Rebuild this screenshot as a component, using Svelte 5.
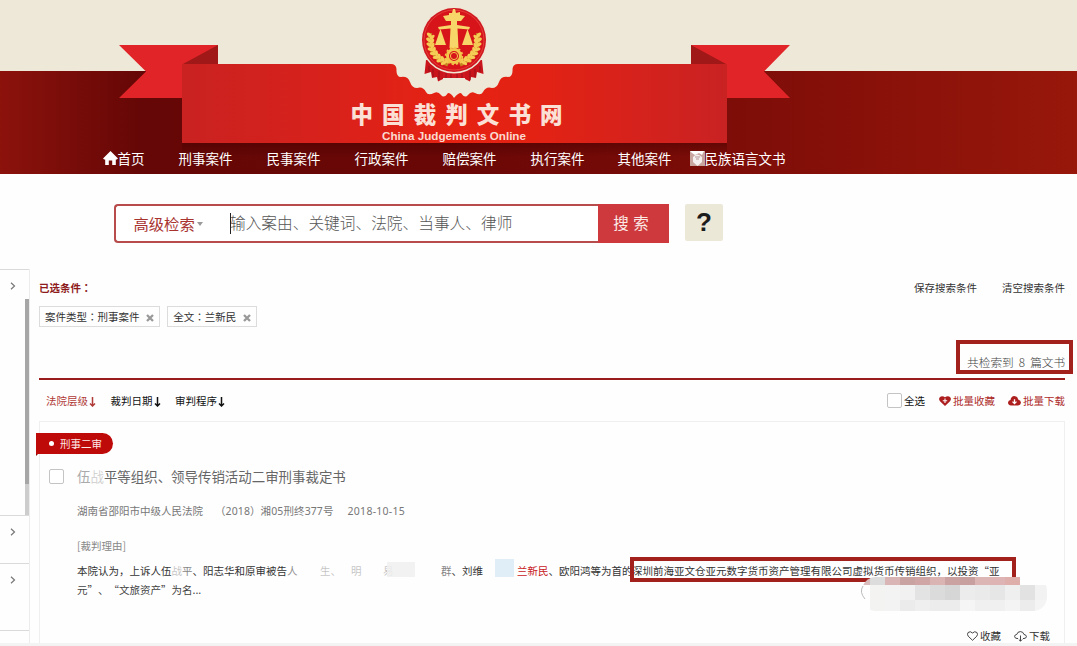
<script>
  const nav = [
    { label: '刑事案件', gap: 34 },
    { label: '民事案件', gap: 34 },
    { label: '行政案件', gap: 34 },
    { label: '赔偿案件', gap: 34 },
    { label: '执行案件', gap: 34 },
    { label: '其他案件', gap: 33 }
  ];
  const filters = [
    { name: '案件类型', value: '刑事案件' },
    { name: '全文', value: '兰新民' }
  ];
  const sorts = [
    { label: '法院层级', active: true },
    { label: '裁判日期', active: false },
    { label: '审判程序', active: false }
  ];
  const panels = [
    { height: 246, scroll: true },
    { height: 48 },
    { height: 67 },
    { height: 13, bare: true }
  ];
  // mosaic tiles over the lower right corner of the summary
  const tiles = [
    { h: 8, c: ['#d9bcbc', '#dcdcdc', '#dab5b5', '#c9a2a2', '#cfa5a5', '#dab3b3', '#cba2a2', '#c9a0a0', '#dcb5b5', '#ddb3b3', '#deaeaa', '#fefefe', '#fefefe'] },
    { h: 15, c: ['#fefefe', '#f3f3f1', '#f3f3f3', '#f1f1f1', '#e3e3e4', '#dbdbdb', '#d6d6d6', '#ececec', '#eaeaea', '#e6e6e6', '#efefef', '#e2e2e3', '#f2f2f2'] },
    { h: 11, c: ['#fefefe', '#f3f3f1', '#f3f3f3', '#ebebeb', '#efefef', '#ececec', '#ececec', '#f5f5f5', '#f0f0f0', '#f0f0f0', '#f4f4f4', '#ececec', '#f4f4f4'] }
  ];
  const leaves = [0, 1, 2, 3, 4, 5, 6, 7];
</script>

<div class="page">
  <header>
    <svg class="banner" width="1077" height="174" viewBox="0 0 1077 174">
      <defs>
        <linearGradient id="body" x1="182" x2="727" y1="0" y2="0" gradientUnits="userSpaceOnUse">
          <stop offset="0" stop-color="#c92221" /><stop offset=".28" stop-color="#d9211b" /><stop offset=".5" stop-color="#e62212" />
          <stop offset=".65" stop-color="#e32214" /><stop offset="1" stop-color="#c92223" />
        </linearGradient>
        <linearGradient id="shade" x1="0" x2="0" y1="0" y2="1">
          <stop offset="0" stop-color="#400" stop-opacity=".45" /><stop offset="1" stop-color="#400" stop-opacity="0" />
        </linearGradient>
      </defs>
      <rect x="182" y="143" width="545" height="14" fill="url(#shade)" />
      <path d="M119 45H218V98H119L146 71.500Z" fill="#e12428" />
      <path d="M790 45H691V98H790L764 71.500Z" fill="#e12428" />
      <path d="M183 64L218 45V98H183Z" fill="#a01818" />
      <path d="M726 64L691 45V98H726Z" fill="#a01818" />
      <rect x="390" y="62" width="130" height="40" fill="#eee8d9" />
      <path fill="url(#body)" d="M182 64H391Q396 64 396.500 69Q396 77 401 77Q408 76 410 82Q412 88 417 88Q423 86 426 92Q428 96 434 93Q438 91 441 95Q444 99 448 93Q451 93 454 98Q458 93 461 93Q465 99 468 95Q471 91 475 93Q481 96 483 92Q486 86 492 88Q497 88 499 82Q501 76 508 77Q513 77 512.500 69Q513 64 518 64H727V143H182Z" />
      <g>
        <path d="M426 60L424.500 74L431 72L432 78L437 77L438 81.500L443 79V73H465V79L470 81.500L471 77L476 78L477 72L483.500 74L482 60Z" fill="#c9141b" />
        <path d="M443 70H465V78H443Z" fill="#d01820" />
        <path d="M429 66V72M433 69V77M439 71V80M446 73V78M451 74V78M457 74V78M462 73V78M470 71V80M475 69V77M480 66V72" stroke="#96101a" stroke-width="1" />
        <circle cx="454" cy="40" r="33.500" fill="#efe6d4" />
        <circle cx="454" cy="40" r="32" fill="#d01820" />
        <circle cx="454" cy="40" r="30" fill="#d8141b" stroke="#e8493f" stroke-width=".8" />
        <path d="M430.500 33Q426 55 448 65M477.500 33Q482 55 460 65" fill="none" stroke="#c78622" stroke-width="3.500" />
        {#each leaves as n}
          <g fill="#f5cc55">
            <ellipse cx="454" cy="15" rx="1.700" ry="3.300" transform="rotate({-79 - n * 11} 454 40) rotate(38 454 15)" />
            <ellipse cx="454" cy="18" rx="1.600" ry="3" transform="rotate({-83 - n * 11} 454 40) rotate(125 454 18)" />
            <ellipse cx="454" cy="15" rx="1.700" ry="3.300" transform="rotate({79 + n * 11} 454 40) rotate(-38 454 15)" />
            <ellipse cx="454" cy="18" rx="1.600" ry="3" transform="rotate({83 + n * 11} 454 40) rotate(-125 454 18)" />
          </g>
        {/each}
        <g fill="#f8d568">
          <path d="M453 9H455L456 13L460 12V15L465 16L461 21H457V25L470 27L469 29.500L457.500 28.500L458.500 48H449.500L450.500 28.500L439 29.500L438 27L451 25V21H446L443 16L449 15V13H452Z" />
          <path d="M440.500 29L446 45H435ZM467.500 29L473 45H462Z" />
        </g>
        <circle cx="454" cy="56" r="6.500" fill="#d8141b" stroke="#f3c64c" stroke-width="3" />
        <circle cx="454" cy="56" r="8.400" fill="none" stroke="#f3c64c" stroke-width="1.600" stroke-dasharray="2.200 2.200" />
        <circle cx="454" cy="56" r="3.600" fill="none" stroke="#f3c64c" stroke-width="1" />
      </g>
      <text class="brand" x="350.500" y="122.500" textLength="212" fill="#fbe0d6">中国裁判文书网</text>
      <text class="brand-en" x="382" y="139.500" textLength="144" lengthAdjust="spacingAndGlyphs" fill="#fbd9cf">China Judgements Online</text>
    </svg>
    <nav>
      <a class="home"><svg width="15" height="14" viewBox="0 0 15 14"><path fill="#fff" d="M7.500 0L15 7.500L13.800 8.500H12.800V14H9.200V9.500H5.800V14H2.200V8.500H1.200L0 7.500Z" /></svg>首页</a>
      {#each nav as item}
        <a style="margin-left:{item.gap}px">{item.label}</a>
      {/each}
      <a class="lang"><svg width="15" height="15" viewBox="0 0 15 15"><rect width="15" height="15" fill="#c9a5a0" /><path d="M0 0H14L12 4L9 2L5 4L2 2Z" fill="#fff" /><path d="M3 6Q7 1 12 6V11L7.500 15L3 11Z" fill="#f4eeee" /><path d="M5 6H10M6 8H9" stroke="#b39494" /></svg>民族语言文书</a>
    </nav>
  </header>

  <section class="search">
    <div class="box">
      <div class="mode">高级检索<i></i></div>
      <div class="field">输入案由、关键词、法院、当事人、律师</div>
      <button>搜 索</button>
    </div>
    <div class="help">?</div>
  </section>

  <main>
    <aside>
      {#each panels as p}
        <div class="panel" style="height:{p.height}px">
          {#if !p.bare}
            <svg width="6" height="8" viewBox="0 0 6 8"><path d="M1 .8L4.500 4L1 7.200" fill="none" stroke="#777" stroke-width="1.200" /></svg>
          {/if}
          {#if p.scroll}<div class="track"><div class="thumb"></div></div>{/if}
        </div>
      {/each}
    </aside>

    <div class="content">
      <div class="cond">
        <b>已选条件<span class="tc">：</span></b>
        <div class="acts"><span>保存搜索条件</span><span>清空搜索条件</span></div>
      </div>
      <div class="tags">
        {#each filters as f}
          <span class="tag">{f.name}<span class="tc">：</span>{f.value}<svg width="8" height="8" viewBox="0 0 8 8"><path d="M1 1L7 7M7 1L1 7" stroke="#999" stroke-width="2.300" /></svg></span>
        {/each}
      </div>
      <div class="count"><div>共检索到 8 篇文书</div></div>
      <div class="bar">
        <div class="sorts">
          {#each sorts as s}
            <span class:active={s.active}>{s.label}<svg width="7" height="10" viewBox="0 0 7 10"><path d="M3.500 0V8M1 6.500L3.500 9L6 6.500" fill="none" stroke="currentColor" stroke-width="1.500" /></svg></span>
          {/each}
        </div>
        <div class="batch">
          <span class="all"><i class="check"></i>全选</span>
          <span class="red"><svg width="12" height="10" viewBox="0 0 12 10"><path fill="#ad1f1f" d="M6 10L1 5.300Q-.6 3.300.6 1.400Q3-1 6 1.300Q9-1 11.400 1.400Q12.600 3.300 11 5.300Z" /><path d="M6 2.600V7M3.800 4.800H8.200" stroke="#fff" stroke-width="1.100" /></svg>批量收藏</span>
          <span class="red dl"><svg width="13" height="10" viewBox="0 0 13 10"><path fill="#ad1f1f" d="M3 9.500Q0 9 0 6.500Q.3 4.300 2.500 4Q3 .3 6.300 0Q9.500 0 10.200 3.500Q13 4.200 13 6.700Q12.600 9.300 10 9.500Z" /><path d="M6.500 3.300V7M4.500 5.600L6.500 7.600L8.500 5.600" fill="none" stroke="#fff" stroke-width="1.300" /></svg>批量下载</span>
        </div>
      </div>

      <article>
        <div class="badge"><i></i>刑事二审</div>
        <div class="title"><i class="check"></i><span><span class="half">伍</span><span class="smear">战</span>平等组织、领导传销活动二审刑事裁定书</span></div>
        <div class="meta"><span>湖南省邵阳市中级人民法院</span><span>（2018）湘05刑终377号</span><span>2018-10-15</span></div>
        <div class="label">[裁判理由]</div>
        <div class="line">
          <span class="seg a">本院认为<span>，</span>上诉人伍<span class="smear">战</span><span class="mid">平</span>、阳志华和原审被告<span class="half">人</span></span>
          <span class="seg b smear">生、</span>
          <span class="seg c smear">明</span>
          <span class="seg d smear">易</span>
          <span class="patch gray"></span>
          <span class="seg e"><span class="mid">群</span>、刘维</span>
          <span class="patch blue"></span>
          <span class="seg f"><em>兰新民</em>、欧阳鸿等为首的</span>
          <span class="seg">深圳前海亚文仓亚元数字货币资产管理有限公司虚拟货币传销组织，以投资“亚</span>
          <span class="mark"></span>
          <span class="mosaic">
            {#each tiles as row}
              <span class="trow" style="height:{row.h}px">
                {#each row.c as c}<span style="background:{c}"></span>{/each}
              </span>
            {/each}
          </span>
          <svg class="arc" width="6" height="14" viewBox="0 0 6 14"><path d="M3 0Q-1 6 5 13" fill="none" stroke="#bbb" /></svg>
        </div>
        <div class="line second">元”、“文旅资产”为名...</div>
        <div class="foot">
          <span><svg width="11" height="10" viewBox="0 0 11 10"><path fill="none" stroke="#444" d="M5.500 9.300L1.200 5.200Q-.2 3.300 1.100 1.500Q3.300-.3 5.500 2Q7.700-.3 9.900 1.500Q11.200 3.300 9.800 5.200Z" /></svg>收藏</span>
          <span><svg width="13" height="11" viewBox="0 0 13 11"><path fill="none" stroke="#444" d="M4 7.500H3Q.6 7.300.6 5.300Q.8 3.600 2.800 3.400Q3.400.6 6.400.6Q9.400.7 9.900 3.400Q12.300 3.700 12.400 5.600Q12.200 7.500 10 7.500H9M6.500 4.500V10M4.800 8.500L6.500 10.200L8.200 8.500" /></svg>下载</span>
        </div>
      </article>
    </div>
  </main>
  <div class="strip"></div>
</div>

<style>
  :global(body) { background: #fff; }
  .page {
    width: 1077px; height: 646px; overflow: hidden; display: flex; flex-direction: column;
    font: 10.5px/16px "Noto Sans CJK SC", sans-serif; color: #333; background: #fefefe;
    text-spacing-trim: space-all;
  }
  .page :is(span, div, a, b) { white-space: nowrap; }
  .tc { font-family: "Noto Sans CJK TC", sans-serif; }
  header {
    position: relative; height: 174px; flex: none; display: flex; align-items: flex-end;
    background:
      linear-gradient(#eee8d9, #eee8d9) 0 0 / 100% 71px no-repeat,
      linear-gradient(90deg, #8c120c 0, #650706 140px, #690706 454px, #7e0d08 740px, #98170b 1077px);
  }
  .banner { position: absolute; left: 0; top: 0; }
  .brand { font: 900 22.500px "Noto Sans CJK SC", sans-serif; }
  .brand-en { font: bold 11px "Liberation Sans", sans-serif; }
  nav { position: relative; display: flex; height: 32px; padding-left: 102.500px; font-size: 13.500px; line-height: 30px; color: #fff; }
  nav a { display: flex; align-items: center; }
  .lang { margin-left: 18px; }

  .search { display: flex; gap: 16px; padding: 30px 0 0 114px; height: 65px; flex: none; }
  .box {
    box-sizing: border-box; display: flex; width: 555px; height: 39px; border: 2px solid #b84b4b;
    border-right: 0; border-radius: 4px 0 0 4px; background: #fff;
  }
  .mode { width: 114px; height: 33px; box-sizing: border-box; padding-left: 17.500px; color: #a8332f; font-size: 15.300px; line-height: 32px; display: flex; align-items: center; }
  .mode i { border: 3px solid transparent; border-top: 4px solid #999; border-bottom: 0; margin: 2px 0 0 2px; }
  .field { flex: 1; font-size: 15.700px; line-height: 34px; color: #555; font-weight: 300; position: relative; }
  .field::before { content: ""; position: absolute; left: 0; top: 7px; width: 1px; height: 21px; background: #222; }
  button {
    width: 71px; margin: -2px 0; border: 0; padding: 0 5px 3px 0; background: #cd393c; color: #fbe9e6;
    font: 15.500px "Noto Sans CJK SC", sans-serif; word-spacing: 1px;
  }
  .help {
    width: 38px; height: 37px; background: #ece8d8; border-radius: 2px; text-align: center;
    font: bold 26px/37px "Liberation Sans", sans-serif; color: #1c1c1c;
  }

  main { display: flex; flex: 1; min-height: 0; }
  aside { box-sizing: border-box; width: 30px; border-right: 1px solid #ececec; overflow: hidden; flex: none; }
  .panel { position: relative; box-sizing: border-box; border-top: 1px solid #dadada; padding: 12px 0 0 10px; line-height: 8px; }
  .track { position: absolute; right: 0; top: 29px; bottom: 0; width: 4px; background: #cdcdcd; }
  .thumb { height: 185px; background: #a6a6a6; }

  .content { width: 1026px; margin-left: 9px; display: flex; flex-direction: column; }
  .content > div { flex: none; }
  .cond { box-sizing: border-box; display: flex; justify-content: space-between; padding-top: 11px; height: 37px; }
  .cond b { color: #8e1b1b; }
  .acts { display: flex; gap: 25px; }
  .tags { display: flex; gap: 7.500px; }
  .tag { box-sizing: border-box; height: 21px; line-height: 20px; border: 1px solid #dcdcdc; padding: 0 5px; }
  .tag svg { margin: 0 0 -1px 6.300px; }
  .count {
    height: 51px; display: flex; justify-content: flex-end; align-items: flex-end; border-bottom: 2px solid #9a1c1c;
    font-size: 11.700px; word-spacing: 2.500px;
  }
  .count div {
    position: relative; box-sizing: border-box; width: 117px; height: 34px; margin: 0 -8px 4px 0; border: 4px solid #a3211c;
    padding: 10px 0 0 7px; font-weight: 300; color: #444;
  }
  .bar { display: flex; justify-content: space-between; align-items: center; height: 41px; padding-left: 7px; color: #111; }
  .sorts { display: flex; gap: 13.500px; }
  .sorts svg { margin: 0 1px -2px 1px; }
  .active { color: #b03a37; }
  .batch { display: flex; }
  .batch span { display: flex; align-items: center; }
  .check { box-sizing: border-box; width: 15px; height: 15px; border: 1px solid #c4c4c4; border-radius: 2px; background: #fff; }
  .all .check { margin-right: 2px; }
  .red { color: #ad2b29; margin-left: 14px; }
  .red.dl { margin-left: 13px; }
  .red svg { margin-right: 2px; }

  article { flex: 1; min-height: 0; border: 1px solid #efefef; border-bottom: 0; padding: 11px 14px 0 0; }
  .badge {
    position: relative; display: flex; align-items: center; width: 77px; height: 21px; margin-left: -4px; box-sizing: border-box;
    padding-left: 13px; background: #bf0a0a; color: #fde9e6; border-radius: 0 11px 11px 0;
  }
  .badge::after { content: ""; position: absolute; left: 0; top: 21px; border: 1.500px solid #8c0a0a; border-bottom-color: transparent; border-right-color: transparent; }
  .badge i { width: 5px; height: 5px; border-radius: 50%; background: #fff; margin-right: 6px; }
  .title { display: flex; align-items: center; gap: 13px; padding-left: 9px; margin-top: 11px; height: 22px; font-size: 13.450px; color: #666; }
  .meta { display: flex; padding-left: 37px; margin-top: 16px; color: #777; font-family: "Noto Sans", "Noto Sans CJK SC", sans-serif; }
  .meta span:nth-child(2) { margin-left: 12px; letter-spacing: .1px; }
  .meta span:nth-child(3) { margin-left: 14px; letter-spacing: .27px; }
  .label { margin: 19px 0 0 37px; color: #888; }
  .line { position: relative; display: flex; height: 20px; line-height: 20px; margin: 7px 0 0 37px; color: #333; }
  .line.second { margin-top: -1px; color: #444; }
  .seg { flex: none; }
  .a { width: 243px; }
  .b { width: 31px; }
  .c { width: 32px; }
  .d { width: 11px; }
  .smear { opacity: .28; }
  .mid { opacity: .6; }
  .half { opacity: .55; }
  .patch { flex: none; }
  .gray { position: relative; width: 28px; height: 15px; margin: 1px 26px 0 -7px; background: rgba(240, 240, 240, .85); }
  .e { width: 54px; }
  .blue { width: 19px; height: 18px; margin-right: 3px; margin-top: -2px; background: #dfeef7; }
  .f { width: 115px; }
  em { font-style: normal; color: #c8201c; }
  .mark { position: absolute; left: 553px; top: -4px; width: 386px; height: 25px; box-sizing: border-box; border: 4px solid #a3211c; }
  .mosaic { position: absolute; left: 785px; top: 16px; width: 185px; border-radius: 14px; overflow: hidden; }
  .arc { position: absolute; left: 783px; top: 25px; }
  .trow { display: flex; }
  .trow span { flex: none; width: 15px; }
  .trow span:first-child { width: 8px; }
  .foot { display: flex; justify-content: flex-end; gap: 13px; margin-top: 28px; }
  .foot span { display: flex; align-items: center; gap: 2px; }
  .strip { height: 3px; background: #f3f3f3; flex: none; }
</style>
